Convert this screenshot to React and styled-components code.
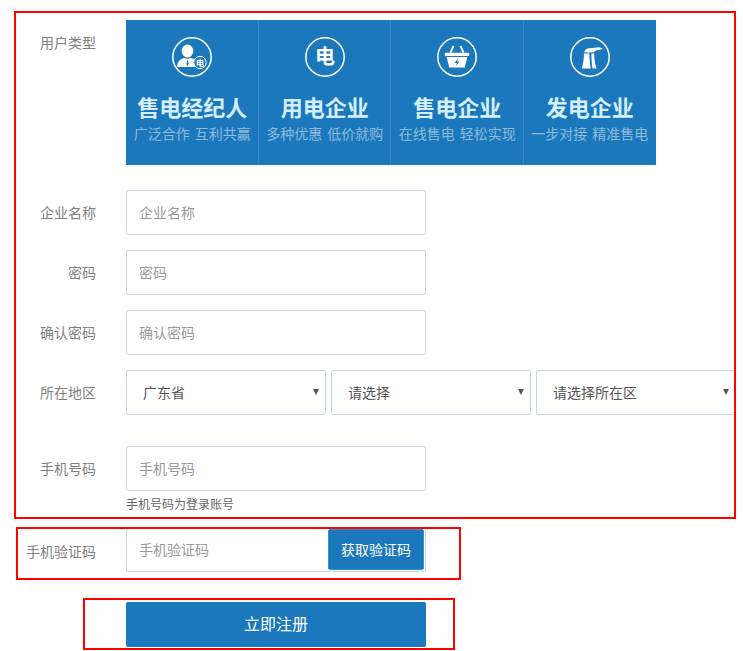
import React from "react";
import styled, { createGlobalStyle } from "styled-components";

const userTypes = [
  { id: "agent", icon: <AgentIcon />, title: "售电经纪人", desc: "广泛合作 互利共赢" },
  { id: "user", icon: <PowerIcon />, title: "用电企业", desc: "多种优惠 低价就购" },
  { id: "seller", icon: <BasketIcon />, title: "售电企业", desc: "在线售电 轻松实现" },
  { id: "maker", icon: <PlantIcon />, title: "发电企业", desc: "一步对接 精准售电" },
];

function Ring({ children }) {
  return (
    <svg width="40" height="40" viewBox="0 0 40 40">
      <circle cx="20" cy="20" r="19.2" fill="none" stroke="#fff" strokeWidth="1.5" />
      {children}
    </svg>
  );
}

function AgentIcon() {
  return (
    <Ring>
      <ellipse cx="15.5" cy="14" rx="5.8" ry="6.4" fill="#fff" />
      <path d="M4.8 30 C5.5 24 9 22 12.5 20.8 L15.5 22 L18.5 20.8 C21 21.6 23 22.6 24 24.5 L22.5 30 Z" fill="#fff" />
      <path d="M15.5 22 L16.6 27 L15.5 29.5 L14.4 27 Z" fill="#1c78bc" />
      <circle cx="28" cy="25.5" r="6.2" fill="#1c78bc" stroke="#fff" strokeWidth="1" />
      <IconText x="28" y="28.6" fontSize="8.5">电</IconText>
    </Ring>
  );
}

function PowerIcon() {
  return (
    <Ring>
      <IconText x="20" y="27" fontSize="20">电</IconText>
    </Ring>
  );
}

function BasketIcon() {
  return (
    <Ring>
      <path d="M16.5 9 L13.5 15.5 M23.5 9 L26.5 15.5" stroke="#fff" strokeWidth="1.8" fill="none" />
      <rect x="7.7" y="15.7" width="24.6" height="3.4" rx="1.2" fill="#fff" />
      <path d="M9.7 20 H30.3 L27.8 30.4 H12.2 Z" fill="#fff" />
      <path d="M21 21.5 L17.6 26 H19.8 L19 29 L22.4 24.6 H20.2 Z" fill="#1c78bc" />
    </Ring>
  );
}

function PlantIcon() {
  return (
    <Ring>
      <path d="M14.5 15 C14.5 12.5 17 11.2 20 11.2 L27 10.4 C29.5 10.2 31.5 10.8 33 12 L28.5 13 C26 13.4 24.5 14.2 23.5 15.2 L19 15.6 H14.5 Z" fill="#fff" />
      <path d="M14 16.5 H19.4 C19.4 22 20 27 20.8 31.4 H11.8 C13 27 14 22 14 16.5 Z" fill="#fff" />
      <path d="M21.4 16.5 H24.2 C24.2 22 25 27 26.6 31.4 H22.6 C21.8 27 21.4 22 21.4 16.5 Z" fill="#fff" />
    </Ring>
  );
}

const App = () => {
  return (
    <Page>
      <GlobalStyle />
      <MainBox>
        <TypeRow>
          <Label>用户类型</Label>
          <TypeGrid>
            {userTypes.map((t) => (
              <Tile key={t.id}>
                {t.icon}
                <TileTitle>{t.title}</TileTitle>
                <TileDesc>{t.desc}</TileDesc>
              </Tile>
            ))}
          </TypeGrid>
        </TypeRow>
        <Row>
          <Label>企业名称</Label>
          <Input placeholder="企业名称" />
        </Row>
        <Row>
          <Label>密码</Label>
          <Input type="password" placeholder="密码" />
        </Row>
        <Row>
          <Label>确认密码</Label>
          <Input type="password" placeholder="确认密码" />
        </Row>
        <Row>
          <Label>所在地区</Label>
          <SelectWrap>
            <Select defaultValue="广东省">
              <option>广东省</option>
            </Select>
          </SelectWrap>
          <SelectWrap>
            <Select defaultValue="请选择">
              <option>请选择</option>
            </Select>
          </SelectWrap>
          <SelectWrap>
            <Select defaultValue="请选择所在区">
              <option>请选择所在区</option>
            </Select>
          </SelectWrap>
        </Row>
        <PhoneRow>
          <Label>手机号码</Label>
          <div>
            <Input placeholder="手机号码" />
            <Hint>手机号码为登录账号</Hint>
          </div>
        </PhoneRow>
      </MainBox>
      <CodeBox>
        <Label $width={78}>手机验证码</Label>
        <CodeGroup>
          <CodeInput placeholder="手机验证码" />
          <CodeButton type="button">获取验证码</CodeButton>
        </CodeGroup>
      </CodeBox>
      <SubmitBox>
        <SubmitButton type="button">立即注册</SubmitButton>
      </SubmitBox>
    </Page>
  );
};

export default App;

const GlobalStyle = createGlobalStyle`
  body {
    margin: 0;
    background: #fff;
    font-family: "Noto Sans CJK SC", "Liberation Sans", sans-serif;
  }
  * {
    box-sizing: border-box;
  }
`;

const Page = styled.div`
  width: 743px;
  height: 651px;
  padding-top: 11px;
  overflow: hidden;
`;

const MainBox = styled.section`
  width: 722px;
  height: 508px;
  margin-left: 14px;
  padding-top: 7px;
  border: 2px solid #f00;
  overflow: hidden;
`;

const Row = styled.div`
  display: flex;
  height: 45px;
  margin-bottom: 15px;
`;

const TypeRow = styled(Row)`
  height: 145px;
  margin-bottom: 25px;
`;

const PhoneRow = styled(Row)`
  margin-top: 31px;
  margin-bottom: 0;
`;

const Label = styled.label`
  flex: none;
  width: ${(p) => p.$width || 80}px;
  margin-right: 30px;
  font-size: 14px;
  line-height: 45px;
  text-align: right;
  color: #808080;
`;

const TypeGrid = styled.div`
  display: grid;
  grid-template-columns: repeat(4, 1fr);
  width: 530px;
  background: #1c78bc;
`;

const Tile = styled.div`
  display: flex;
  flex-direction: column;
  align-items: center;
  padding: 17px 0 0 1px;
  border-right: 1px solid #3a87c0;
  white-space: nowrap;

  &:last-child {
    padding-left: 0;
    border-right: 0;
  }

  svg {
    display: block;
  }
`;

const IconText = styled.text`
  fill: #fff;
  font-weight: 700;
  text-anchor: middle;
`;

const TileTitle = styled.div`
  margin-top: 13px;
  font-size: 22px;
  line-height: 32px;
  font-weight: 700;
  color: #d3eefc;
`;

const TileDesc = styled.div`
  margin-top: 1px;
  font-size: 14px;
  line-height: 20px;
  word-spacing: 2px;
  color: #8dbbdb;
`;

const Input = styled.input`
  display: block;
  width: 300px;
  height: 45px;
  padding: 0 12px 2px;
  border: 1px solid #c9d5e0;
  border-radius: 2px;
  outline: none;
  background: #fff;
  font-family: inherit;
  font-size: 14px;
  color: #555;

  &::placeholder {
    color: #999;
  }
`;

const SelectWrap = styled.div`
  position: relative;
  flex: none;
  width: 200px;
  margin-right: 5px;

  &::after {
    content: "";
    position: absolute;
    top: 19px;
    right: 7px;
    border-style: solid;
    border-width: 6px 3px 0;
    border-color: #555 transparent transparent;
    pointer-events: none;
  }
`;

const Select = styled.select`
  display: block;
  width: 100%;
  height: 45px;
  padding: 0 0 2px 16px;
  border: 1px solid #c9d5e0;
  border-radius: 2px;
  outline: none;
  appearance: none;
  background: #fff;
  font-family: inherit;
  font-size: 14px;
  color: #555;
`;

const Hint = styled.div`
  margin-top: 4px;
  font-size: 12px;
  line-height: 17px;
  color: #666;
`;

const CodeBox = styled.section`
  display: flex;
  width: 445px;
  height: 53px;
  margin: 8px 0 0 16px;
  border: 2px solid #f00;
`;

const CodeGroup = styled.div`
  display: flex;
  width: 300px;
  height: 43px;
  border: 1px solid #c9d5e0;
  border-top: 0;
  border-radius: 2px;
`;

const CodeInput = styled.input`
  flex: 1;
  min-width: 0;
  padding: 0 12px 2px;
  border: 0;
  outline: none;
  background: transparent;
  font-family: inherit;
  font-size: 14px;

  &::placeholder {
    color: #999;
  }
`;

const CodeButton = styled.button`
  flex: none;
  width: 96px;
  height: 41px;
  margin-right: 1px;
  padding: 0 0 2px;
  border: 1px solid #2f93c6;
  border-radius: 2px;
  background: #1c78bc;
  font-family: inherit;
  font-size: 14px;
  color: #fff;
`;

const SubmitBox = styled.section`
  width: 372px;
  height: 52px;
  margin: 18px 0 0 83px;
  padding: 2px 0 0 41px;
  border: 2px solid #f00;
`;

const SubmitButton = styled.button`
  display: block;
  width: 300px;
  height: 45px;
  padding: 0 0 3px;
  border: 0;
  border-radius: 2px;
  background: #1c78bc;
  font-family: inherit;
  font-size: 16px;
  color: #fff;
`;
